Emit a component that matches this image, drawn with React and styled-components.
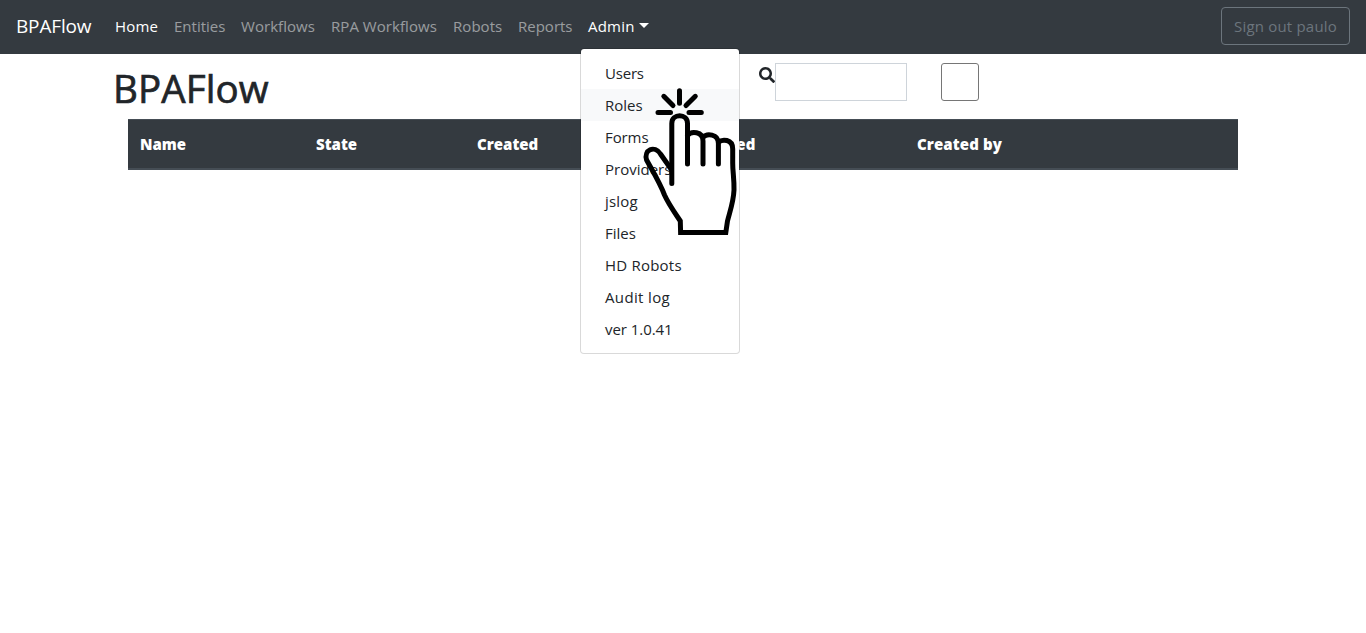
import React from 'react';
import styled, { createGlobalStyle } from 'styled-components';

const GlobalStyle = createGlobalStyle`
  *, *::before, *::after { box-sizing: border-box; }
  body {
    margin: 0;
    background: #fff;
    color: #212529;
    font-family: "Segoe UI", "Open Sans", "Noto Sans", sans-serif;
    font-size: 15px;
    line-height: 24px;
  }
`;

const Page = styled.div`
  min-height: 100vh;
`;

const Navbar = styled.nav`
  display: flex;
  align-items: center;
  height: 54px;
  padding: 0 16px 2px;
  background: #343a40;
  white-space: nowrap;
`;

const Brand = styled.a`
  width: 75px;
  margin-right: 16px;
  color: #fff;
  font-size: 19px;
  line-height: 30px;
  letter-spacing: -0.15px;
`;

const NavItem = styled.div`
  position: relative;
  width: ${(p) => p.$width}px;
  padding-left: 8px;
  color: ${(p) => (p.$active ? '#fff' : 'rgba(255, 255, 255, 0.5)')};
  letter-spacing: ${(p) => p.$spacing || 0}px;
`;

const Caret = styled.span`
  display: inline-block;
  margin-left: 4px;
  vertical-align: 4px;
  border-top: 5px solid;
  border-left: 5px solid transparent;
  border-right: 5px solid transparent;
`;

const Menu = styled.div`
  position: absolute;
  z-index: 2;
  top: 34px;
  left: 0;
  width: 160px;
  height: 306px;
  padding: 8px 0;
  border: 1px solid rgba(0, 0, 0, 0.15);
  border-radius: 4px;
  background: #fff;
  background-clip: padding-box;
  letter-spacing: 0;
`;

const MenuItem = styled.div`
  height: 32px;
  padding: 4px 24px;
  color: #212529;
  background: ${(p) => (p.$hover ? '#f8f9fa' : 'transparent')};
  letter-spacing: ${(p) => p.$spacing || 0}px;
`;

const Pointer = styled.svg`
  position: absolute;
  z-index: 3;
  left: 60px;
  top: 71px;
  width: 100px;
  height: 156px;
`;

const SignOut = styled.button`
  width: 129px;
  height: 38px;
  margin-left: auto;
  padding: 0;
  border: 1px solid #6c757d;
  border-radius: 4px;
  background: transparent;
  color: #6c757d;
  font: inherit;
  letter-spacing: 0.2px;
`;

const Container = styled.main`
  width: 1140px;
  margin: 0 auto;
  padding: 0 15px;
`;

const TitleRow = styled.header`
  display: flex;
  height: 65px;
  padding-top: 9px;
  margin-left: -15px;
`;

const Title = styled.h1`
  width: 646px;
  margin: 0;
  padding-top: 1px;
  font-size: 38.5px;
  font-weight: 500;
  line-height: 48px;
  letter-spacing: 0.1px;
  -webkit-text-stroke: 0.7px #212529;
`;

const SearchIcon = styled.svg`
  width: 16px;
  height: 16px;
  margin-top: 4px;
`;

const SearchInput = styled.input`
  width: 132px;
  height: 38px;
  padding: 6px 12px;
  border: 1px solid #ced4da;
  border-radius: 0;
  background: #fff;
`;

const SquareButton = styled.button`
  width: 38px;
  height: 38px;
  margin-left: 34px;
  border: 1px solid #767676;
  border-radius: 3px;
  background: #fff;
`;

const TableHead = styled.div`
  display: grid;
  grid-template-columns: 176px 161px 209px 231px 333px;
  height: 51px;
  border-top: 1px solid #454d55;
  border-bottom: 2px solid #454d55;
  background: #343a40;
`;

const HeadCell = styled.div`
  padding: 12px;
  color: #fff;
  font-weight: 800;
  letter-spacing: ${(p) => p.$spacing || 0}px;
`;

const links = [
  { label: 'Home', width: 59, active: true, spacing: 0.2 },
  { label: 'Entities', width: 67 },
  { label: 'Workflows', width: 90, spacing: 0.05 },
  { label: 'RPA Workflows', width: 122, spacing: 0.05 },
  { label: 'Robots', width: 65, spacing: 0.05 },
  { label: 'Reports', width: 70 },
];

const menuItems = [
  { label: 'Users', spacing: -0.2 },
  { label: 'Roles', hover: true },
  { label: 'Forms', spacing: -0.1 },
  { label: 'Providers' },
  { label: 'jslog', spacing: 0.2 },
  { label: 'Files' },
  { label: 'HD Robots', spacing: 0.22 },
  { label: 'Audit log', spacing: 0.35 },
  { label: 'ver 1.0.41', spacing: -0.05 },
];

const columns = [
  { label: 'Name' },
  { label: 'State' },
  { label: 'Created' },
  { label: 'Modified', spacing: 0.1 },
  { label: 'Created by', spacing: 0.1 },
];

function HandPointer() {
  return (
    <Pointer viewBox="640 85 100 156" fill="none" stroke="#000" strokeWidth="5" strokeLinecap="round">
      <path d="M679.5 90.7V103.3M663.8 96.3L673 105.5M695.3 96.3L686 105.5M658 112.5H670.5M689 112.5H701.3" />
      <path d="M671.8 183.5V123.5C671.8 113.2 687.5 113.2 687.5 123.5V164" />
      <path d="M687.5 135.5C691 131 703 131 703 141V164M703 137.5C706.5 133.2 718.4 133.5 718.4 143.5V164M718.4 142.3C722 139.1 732.7 138.6 732.7 149V163C732.7 172 734.2 178 734 190C733.5 202 730 211 727.5 221L725.8 232.5H680.6L680.3 221C675 213 668.5 204 664.5 195C659.5 182 652 170 646.6 160C643.5 150 654.5 144.8 660.5 154L671 169" />
    </Pointer>
  );
}

export default function App() {
  return (
    <Page>
      <GlobalStyle />
      <Navbar>
        <Brand>BPAFlow</Brand>
        {links.map((l) => (
          <NavItem key={l.label} $width={l.width} $active={l.active} $spacing={l.spacing}>
            {l.label}
          </NavItem>
        ))}
        <NavItem $width={76} $active $spacing={0.2}>
          Admin
          <Caret />
          <Menu>
            {menuItems.map((m) => (
              <MenuItem key={m.label} $hover={m.hover} $spacing={m.spacing}>
                {m.label}
              </MenuItem>
            ))}
          </Menu>
          <HandPointer />
        </NavItem>
        <SignOut>Sign out paulo</SignOut>
      </Navbar>
      <Container>
        <TitleRow>
          <Title>BPAFlow</Title>
          <SearchIcon viewBox="0 0 512 512" fill="#212529">
            <path d="M505 442.700L405.300 343c-4.500-4.500-10.600-7-17-7H372c27.600-35.300 44-79.700 44-128C416 93.100 322.900 0 208 0S0 93.100 0 208s93.100 208 208 208c48.300 0 92.700-16.400 128-44v16.300c0 6.400 2.500 12.500 7 17l99.700 99.700c9.400 9.400 24.600 9.400 33.900 0l28.300-28.300c9.400-9.400 9.400-24.600.1-34zM208 336c-70.700 0-128-57.200-128-128 0-70.700 57.200-128 128-128 70.700 0 128 57.200 128 128 0 70.700-57.200 128-128 128z" />
          </SearchIcon>
          <SearchInput />
          <SquareButton />
        </TitleRow>
        <TableHead>
          {columns.map((c) => (
            <HeadCell key={c.label} $spacing={c.spacing}>
              {c.label}
            </HeadCell>
          ))}
        </TableHead>
      </Container>
    </Page>
  );
}
